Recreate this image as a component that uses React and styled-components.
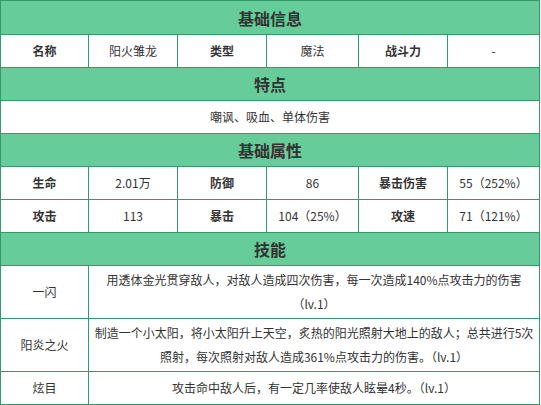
import React from 'react';
import styled, { createGlobalStyle } from 'styled-components';

const GlobalStyle = createGlobalStyle`
  html, body {
    margin: 0;
    padding: 0;
    background: #fff;
  }
  body {
    font-family: "Noto Sans CJK SC", "Microsoft YaHei", sans-serif;
    color: #333;
  }
`;

const Sheet = styled.div`
  width: 540px;
  box-sizing: border-box;
  display: grid;
  grid-template-columns: 87px 88px 88px 91px 88px 91px;
  grid-template-rows: 33px repeat(7, 32px) 52px 52px 32px;
  gap: 1px;
  padding: 1px;
  background: #339966;
  font-size: 12px;
  line-height: 24px;
`;

const Cell = styled.div`
  grid-column: span ${props => props.span || 1};
  display: flex;
  align-items: center;
  justify-content: center;
  text-align: center;
  padding: 0 5px;
  background: #fff;
  color: #333;
  font-weight: ${props => props.label ? 'bold' : 'normal'};
`;

const Heading = styled.div`
  grid-column: span 6;
  display: flex;
  align-items: center;
  justify-content: center;
  background: #66cc99;
  font-size: 16px;
  font-weight: bold;
  color: #333;
`;

const info = [
  ['名称', '阳火雏龙'],
  ['类型', '魔法'],
  ['战斗力', '-'],
];

const stats = [
  [['生命', '2.01万'], ['防御', '86'], ['暴击伤害', '55（252%）']],
  [['攻击', '113'], ['暴击', '104（25%）'], ['攻速', '71（121%）']],
];

const skills = [
  ['一闪', '用透体金光贯穿敌人，对敌人造成四次伤害，每一次造成140%点攻击力的伤害（lv.1）'],
  ['阳炎之火', '制造一个小太阳，将小太阳升上天空，炙热的阳光照射大地上的敌人；总共进行5次照射，每次照射对敌人造成361%点攻击力的伤害。（lv.1）'],
  ['炫目', '攻击命中敌人后，有一定几率使敌人眩晕4秒。（lv.1）'],
];

const Pairs = ({ pairs }) =>
  pairs.map(([label, value]) => (
    <React.Fragment key={label}>
      <Cell label>{label}</Cell>
      <Cell>{value}</Cell>
    </React.Fragment>
  ));

const App = () => (
  <>
    <GlobalStyle />
    <Sheet>
      <Heading>基础信息</Heading>
      <Pairs pairs={info} />
      <Heading>特点</Heading>
      <Cell span={6}>嘲讽、吸血、单体伤害</Cell>
      <Heading>基础属性</Heading>
      {stats.map((pairs, i) => (
        <Pairs key={i} pairs={pairs} />
      ))}
      <Heading>技能</Heading>
      {skills.map(([name, desc]) => (
        <React.Fragment key={name}>
          <Cell>{name}</Cell>
          <Cell span={5}>{desc}</Cell>
        </React.Fragment>
      ))}
    </Sheet>
  </>
);

export default App;
